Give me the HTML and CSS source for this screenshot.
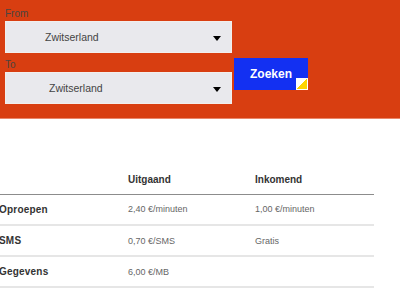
FILE: index.html
```html
<!DOCTYPE html>
<html lang="nl">
<head>
  <meta charset="UTF-8" />
  <meta name="viewport" content="width=device-width, initial-scale=1.0"/>
  <title>Tarieven buitenland</title>
  <link rel="stylesheet" href="styles.css">
</head>
<body>
  <div class="search">
    <label class="label">From</label>
    <div class="select">
      <span class="select-text">Zwitserland</span>
      <span class="arrow"></span>
    </div>

    <div class="row">
      <div class="field">
        <label class="label label-to">To</label>
        <div class="select select-to">
          <span class="select-text">Zwitserland</span>
          <span class="arrow"></span>
        </div>
      </div>
      <button class="btn">Zoeken<span class="corner"></span></button>
    </div>
  </div>

  <table class="rates">
    <thead>
      <tr>
        <th class="col-name"></th>
        <th class="col-out">Uitgaand</th>
        <th class="col-in">Inkomend</th>
      </tr>
    </thead>
    <tbody>
      <tr>
        <td class="name">Oproepen</td>
        <td>2,40 €/minuten</td>
        <td>1,00 €/minuten</td>
      </tr>
      <tr>
        <td class="name">SMS</td>
        <td>0,70 €/SMS</td>
        <td>Gratis</td>
      </tr>
      <tr>
        <td class="name">Gegevens</td>
        <td>6,00 €/MB</td>
        <td></td>
      </tr>
    </tbody>
  </table>
</body>
</html>
```

FILE: styles.css
```css
* {
  margin: 0;
  padding: 0;
  box-sizing: border-box;
  font-family: 'Liberation Sans', Arial, sans-serif;
}

body {
  background: #fff;
  color: #333;
}

.search {
  background: #d83e11;
  border-bottom: 1px solid #e9876a;
  padding: 6px 0 14px 5px;
  height: 119px;
}

.label {
  display: block;
  font-size: 10px;
  line-height: 15px;
  color: #4d4440;
}

.label-to {
  padding-top: 5px;
  line-height: 14px;
}

.select {
  position: relative;
  display: flex;
  align-items: center;
  width: 227px;
  height: 32px;
  background: #e9e9ed;
  border: 1px solid #f2eeec;
  padding-left: 39px;
}

.select-to {
  padding-left: 43px;
}

.select-text {
  font-size: 10.5px;
  color: #444;
}

.arrow {
  position: absolute;
  right: 10px;
  top: 14px;
  width: 0;
  height: 0;
  border-left: 4.5px solid transparent;
  border-right: 4.5px solid transparent;
  border-top: 5px solid #000;
}

.row {
  display: flex;
  align-items: flex-start;
}

.btn {
  position: relative;
  margin: 5px 0 0 2px;
  width: 74px;
  height: 32px;
  background: #1330f2;
  color: #fff;
  font-size: 12px;
  font-weight: bold;
  border: none;
  cursor: pointer;
}

.corner {
  position: absolute;
  right: 0;
  bottom: 0;
  width: 12px;
  height: 12px;
  border: 1px solid #fff;
  background: linear-gradient(to bottom right, #fff 50%, #ffd200 50%);
}

.rates {
  margin: 46px 0 0 -1px;
  width: 375px;
  border-collapse: collapse;
  table-layout: fixed;
}

.col-name { width: 129px; }
.col-out { width: 127px; }
.col-in { width: 119px; }

.rates th {
  height: 29px;
  text-align: left;
  font-size: 10px;
  font-weight: bold;
  color: #333;
  border-bottom: 1px solid #8c8c8c;
}

.rates td {
  height: 31px;
  font-size: 9px;
  color: #666;
  border-bottom: 2px solid #e6e6e6;
}

.rates td.name {
  font-size: 10px;
  font-weight: bold;
  color: #333;
  letter-spacing: 0.2px;
}
```
